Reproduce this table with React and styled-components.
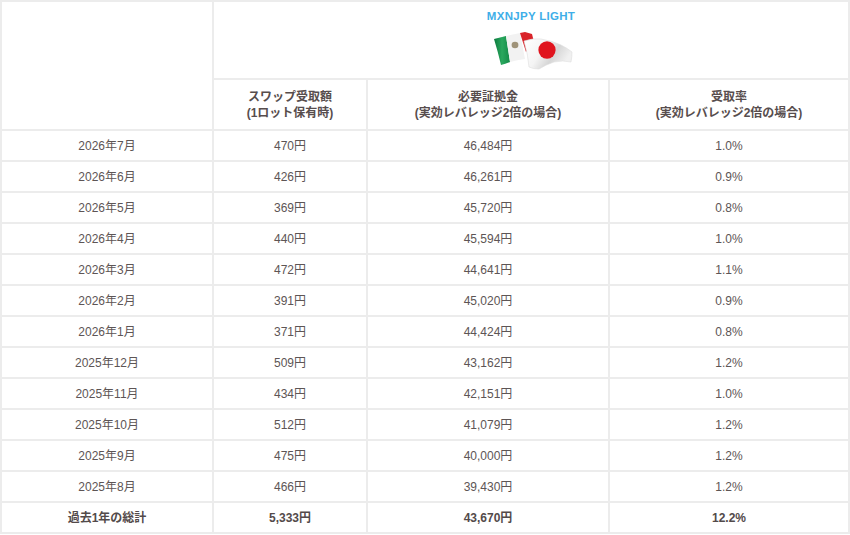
import React from 'react';
import styled, { createGlobalStyle } from 'styled-components';

const GlobalStyle = createGlobalStyle`
  html, body {
    margin: 0;
    padding: 0;
    background: #fff;
  }
  body {
    font-family: "Liberation Sans", "Noto Sans CJK JP", sans-serif;
    color: #574f4f;
  }
`;

const Table = styled.table`
  width: 850px;
  border-collapse: separate;
  border-spacing: 0;
  border-top: 2px solid #ececec;
  border-left: 2px solid #ececec;
  table-layout: fixed;
  box-sizing: border-box;
`;

const Cell = styled.td`
  box-sizing: border-box;
  border-right: 2px solid #ececec;
  border-bottom: 2px solid #ececec;
  padding: 0;
  text-align: center;
  vertical-align: middle;
  font-size: 12px;
  font-weight: ${(p) => (p.$bold ? 700 : 400)};
  height: ${(p) => p.$h || 31}px;
  line-height: 16px;
  color: ${(p) => (p.$bold ? '#534a4a' : '#5d5555')};
`;

const HeadCell = styled(Cell).attrs({ as: 'th' })`
  font-weight: 700;
  color: #574d4d;
`;

const Title = styled.div`
  color: #3eaee8;
  font-size: 11.5px;
  font-weight: 700;
  letter-spacing: 0.3px;
  margin-top: -4px;
`;

const FlagWrap = styled.div`
  display: flex;
  justify-content: center;
  margin-top: 6px;
  margin-bottom: -4px;
  padding-left: 4px;
`;

function Flags() {
  return (
    <svg width="84" height="42" viewBox="0 0 84 42">
      <defs>
        <linearGradient id="jp" x1="0" y1="0" x2="1" y2="0.4">
          <stop offset="0" stopColor="#ffffff" />
          <stop offset="0.45" stopColor="#f4f4f4" />
          <stop offset="0.72" stopColor="#d6d6d6" />
          <stop offset="1" stopColor="#f0f0f0" />
        </linearGradient>
        <linearGradient id="mxg" x1="0" y1="0" x2="1" y2="0">
          <stop offset="0" stopColor="#0c7a3e" />
          <stop offset="0.5" stopColor="#2aa85e" />
          <stop offset="1" stopColor="#148a48" />
        </linearGradient>
      </defs>
      {/* mexican flag, behind */}
      <path d="M3 9 L15 6 L19 32 Q14 34 10 35 Q7 22 3 9 Z" fill="url(#mxg)" />
      <path d="M15 6 L29 3 L34 29 Q26 30 19 32 Z" fill="#f2f2f2" />
      <ellipse cx="24" cy="15" rx="3.4" ry="3.2" fill="#8a7a5a" opacity="0.8" />
      <path d="M29 3 L34 2 L41 4 L43 12 L35 22 Z" fill="#d9242a" />
      {/* japanese flag, front */}
      <path
        d="M33 11 Q42 8 50 9 Q62 11 70 15 Q76 18 81 22 Q81 27 80 32 Q72 30 63 32 Q54 35 48 39 Q42 39 38 37 Q37 24 33 11 Z"
        fill="url(#jp)"
        stroke="#dedede"
        strokeWidth="0.6"
      />
      <ellipse cx="56" cy="20" rx="8.6" ry="8.8" fill="#e0141e" />
    </svg>
  );
}

const rows = [
  ['2026年7月', '470円', '46,484円', '1.0%'],
  ['2026年6月', '426円', '46,261円', '0.9%'],
  ['2026年5月', '369円', '45,720円', '0.8%'],
  ['2026年4月', '440円', '45,594円', '1.0%'],
  ['2026年3月', '472円', '44,641円', '1.1%'],
  ['2026年2月', '391円', '45,020円', '0.9%'],
  ['2026年1月', '371円', '44,424円', '0.8%'],
  ['2025年12月', '509円', '43,162円', '1.2%'],
  ['2025年11月', '434円', '42,151円', '1.0%'],
  ['2025年10月', '512円', '41,079円', '1.2%'],
  ['2025年9月', '475円', '40,000円', '1.2%'],
  ['2025年8月', '466円', '39,430円', '1.2%'],
];

export default function App() {
  return (
    <>
      <GlobalStyle />
      <Table>
        <colgroup>
          <col style={{ width: 212 }} />
          <col style={{ width: 154 }} />
          <col style={{ width: 242 }} />
          <col />
        </colgroup>
        <thead>
          <tr>
            <HeadCell rowSpan={2} $h={78} />
            <HeadCell colSpan={3} $h={78}>
              <Title>MXNJPY LIGHT</Title>
              <FlagWrap>
                <Flags />
              </FlagWrap>
            </HeadCell>
          </tr>
          <tr>
            <HeadCell $h={51}>
              スワップ受取額
              <br />
              (1ロット保有時)
            </HeadCell>
            <HeadCell $h={51}>
              必要証拠金
              <br />
              (実効レバレッジ2倍の場合)
            </HeadCell>
            <HeadCell $h={51}>
              受取率
              <br />
              (実効レバレッジ2倍の場合)
            </HeadCell>
          </tr>
        </thead>
        <tbody>
          {rows.map((r) => (
            <tr key={r[0]}>
              {r.map((v, i) => (
                <Cell key={i}>{v}</Cell>
              ))}
            </tr>
          ))}
          <tr>
            <Cell $bold>過去1年の総計</Cell>
            <Cell $bold>5,333円</Cell>
            <Cell $bold>43,670円</Cell>
            <Cell $bold>12.2%</Cell>
          </tr>
        </tbody>
      </Table>
    </>
  );
}
